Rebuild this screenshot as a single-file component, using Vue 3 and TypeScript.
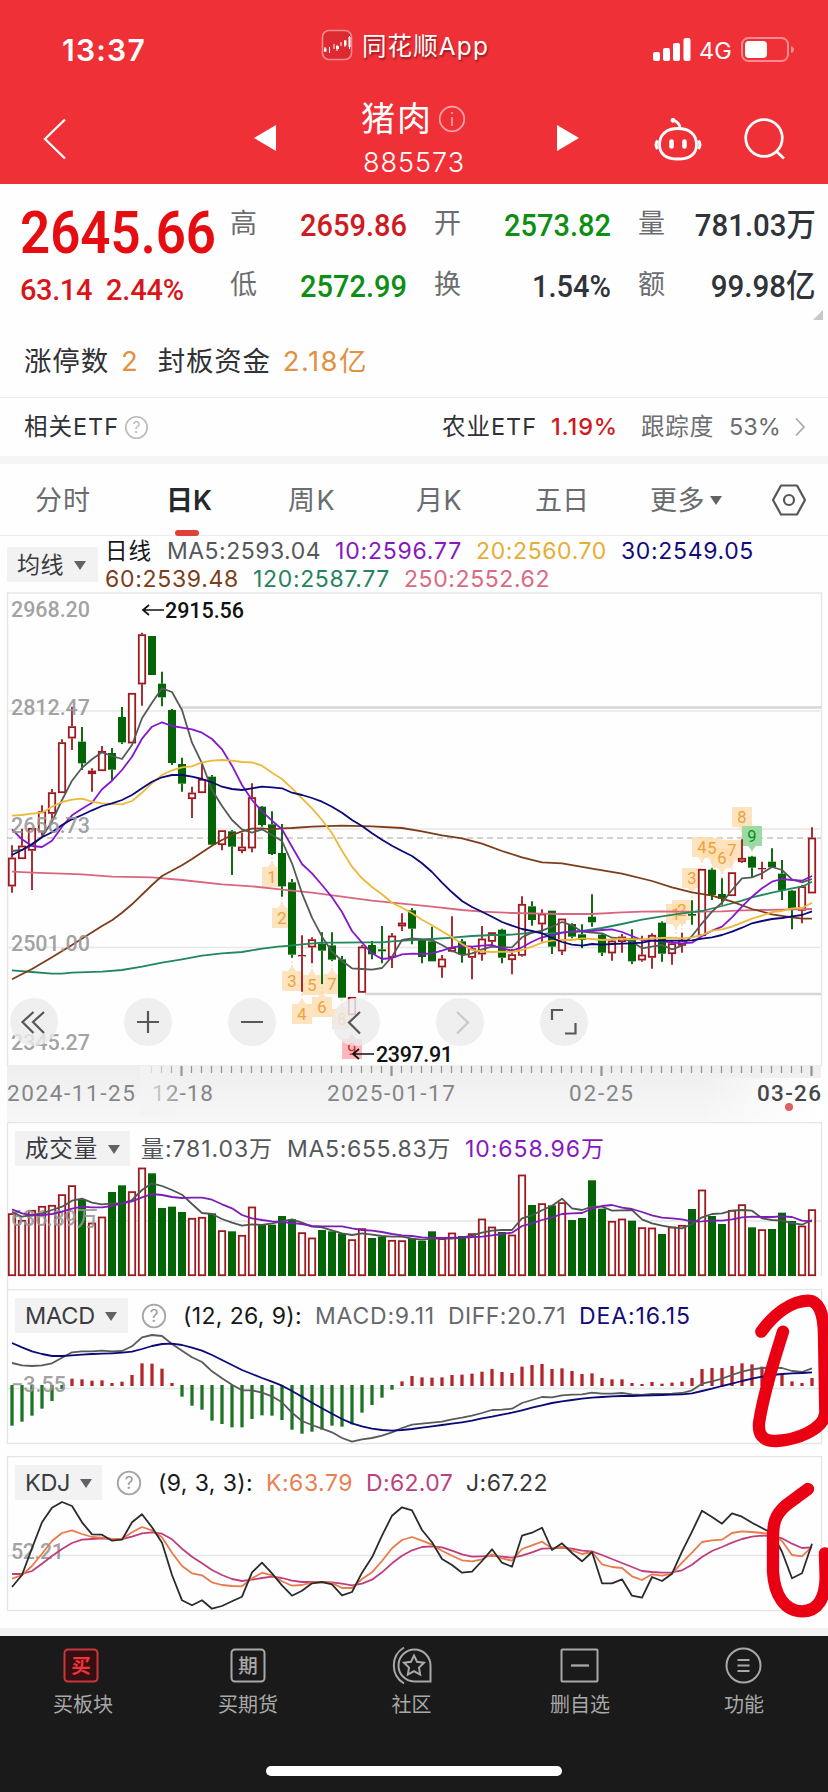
<script setup lang="ts">
import type { Directive } from 'vue'

/*
 * Makes a label take the given width: by tracking, or with the
 * squeeze modifier by narrowing the letterforms themselves.
 */
const vFit: Directive<HTMLElement, number, 'squeeze'> = {
  mounted(el, { value, modifiers }) {
    const natural = el.getBoundingClientRect().width
    if (modifiers.squeeze) {
      el.style.transform = `scaleX(${(value / natural).toFixed(4)})`
      return
    }
    const count = Array.from(el.textContent ?? '').length
    el.style.letterSpacing = `${((value - natural) / count).toFixed(3)}px`
  },
}

type Candle = [up: 0 | 1, top: number, bottom: number, high: number, low: number]
type Block = { x: number; y: number; points: number[] }

/* Values are stored in thirds of a pixel, relative to the origin of their block. */
const third = (origin: number, v: number) => origin + v / 3
const at = (i: number) => 12 + i * 10

const shift = (rows: Candle[], y: number): Candle[] =>
  rows.map(([u, a, b, h, l]) => [u, third(y, a), third(y, b), third(y, h), third(y, l)])

const candles: Candle[] = [
  ...shift([
    [1, 803, 889, 766, 908], [1, 767, 807, 716, 807], [1, 714, 782, 714, 900], [1, 664, 727, 646, 737],
    [1, 607, 671, 597, 692], [1, 457, 609, 448, 609], [1, 409, 445, 350, 480], [0, 455, 520, 411, 540],
    [1, 542, 552, 535, 605], [1, 483, 543, 468, 543], [0, 489, 539, 474, 570], [0, 381, 457, 351, 462],
    [1, 309, 460, 309, 460], [1, 133, 283, 128, 347], [0, 138, 255, 138, 255], [0, 281, 322, 245, 349],
    [0, 360, 519, 357, 525], [0, 522, 581, 503, 605], [1, 608, 627, 590, 684], [1, 567, 609, 522, 609],
    [0, 560, 764, 555, 768], [1, 721, 765, 721, 781], [0, 724, 770, 720, 855], [1, 770, 783, 728, 790],
    [1, 622, 775, 580, 787], [0, 650, 705, 648, 710], [0, 703, 792, 664, 795],
  ], 590),
  ...shift([
    [0, 339, 439, 252, 470], [0, 427, 644, 417, 653], [1, 645, 649, 586, 755], [1, 598, 622, 592, 670],
    [0, 611, 632, 577, 732], [0, 616, 659, 577, 663], [0, 658, 773, 648, 773], [1, 771, 825, 771, 825],
    [1, 620, 758, 615, 758], [0, 615, 643, 603, 658], [0, 628, 634, 558, 670], [1, 587, 653, 579, 684],
    [1, 548, 559, 520, 573], [0, 511, 566, 504, 613], [0, 597, 651, 597, 670], [0, 604, 664, 560, 664],
    [1, 656, 682, 645, 713], [1, 622, 635, 529, 637], [0, 604, 643, 597, 668], [1, 625, 653, 620, 718],
    [1, 596, 643, 558, 662], [1, 577, 605, 577, 620], [0, 569, 653, 566, 670], [1, 643, 660, 627, 703],
    [1, 492, 647, 469, 650], [0, 499, 540, 484, 557],
  ], 740),
  ...shift([
    [1, 401, 433, 388, 485], [0, 392, 500, 392, 522], [1, 416, 514, 416, 525], [0, 432, 470, 430, 475],
    [0, 463, 480, 433, 505], [0, 410, 427, 343, 440], [0, 464, 518, 460, 528], [1, 482, 520, 480, 542],
    [1, 470, 486, 462, 518], [0, 475, 544, 448, 552], [1, 524, 541, 467, 545], [1, 465, 533, 460, 566],
    [0, 428, 521, 424, 545], [1, 490, 522, 480, 554], [1, 480, 497, 458, 518], [0, 402, 407, 361, 434],
    [1, 267, 468, 267, 468], [0, 269, 345, 265, 360], [0, 342, 356, 295, 374], [1, 277, 348, 277, 348],
    [1, 234, 246, 178, 248], [0, 230, 263, 228, 293], [1, 264, 268, 245, 298], [0, 245, 262, 205, 262],
    [0, 281, 331, 240, 360], [0, 332, 385, 330, 448], [1, 319, 392, 315, 430], [1, 173, 340, 142, 340],
  ], 780),
]

const trace = (a: number[], b: number[], c: number[]): string => {
  const blocks: Block[] = [
    { x: 0, y: 590, points: a },
    { x: 270, y: 740, points: b },
    { x: 540, y: 780, points: c },
  ]
  return blocks
    .flatMap((k) => {
      const out: string[] = []
      for (let i = 0; i < k.points.length; i += 2) {
        out.push(`${third(k.x, k.points[i]).toFixed(1)},${third(k.y, k.points[i + 1]).toFixed(1)}`)
      }
      return out
    })
    .join(' ')
}

const averages = [
  {
    color: '#d9667f',
    points: trace(
      [36, 845, 96, 848, 186, 851, 246, 853, 336, 860, 456, 862, 546, 870, 666, 883, 756, 889, 840, 898],
      [36, 449, 126, 458, 216, 470, 306, 482, 396, 491, 486, 500, 576, 510, 636, 515, 726, 519, 816, 521],
      [66, 402, 156, 402, 246, 397, 306, 395, 366, 394, 426, 395, 486, 395, 546, 394, 606, 391, 666, 390, 726, 389, 816, 387],
    ),
  },
  {
    color: '#21875f',
    points: trace(
      [36, 1141, 96, 1146, 156, 1151, 186, 1151, 216, 1148, 306, 1145, 366, 1140, 426, 1130, 486, 1118, 546, 1108, 606, 1097, 666, 1090, 726, 1086, 786, 1076, 840, 1069],
      [36, 619, 96, 613, 156, 608, 216, 608, 276, 607, 336, 607, 366, 604, 426, 600, 486, 597, 546, 593, 606, 588, 666, 585, 726, 584, 786, 578, 816, 574],
      [6, 462, 66, 458, 126, 453, 186, 444, 246, 432, 306, 419, 366, 409, 426, 400, 486, 393, 546, 378, 606, 362, 636, 352, 696, 338, 756, 325, 786, 320, 816, 305],
    ),
  },
  {
    color: '#7c3d18',
    points: trace(
      [36, 1168, 96, 1137, 156, 1102, 216, 1065, 306, 1008, 336, 991, 366, 968, 396, 943, 456, 885, 486, 858, 546, 826, 576, 807, 636, 767, 666, 750, 696, 735, 726, 724, 756, 716, 786, 715, 816, 718],
      [36, 265, 66, 264, 126, 260, 216, 257, 306, 259, 396, 264, 456, 274, 516, 286, 576, 295, 636, 311, 696, 333, 756, 352, 816, 367],
      [66, 250, 156, 266, 246, 281, 336, 303, 396, 322, 456, 337, 516, 347, 576, 365, 636, 387, 696, 403, 756, 412, 786, 416, 816, 416],
    ),
  },
  {
    color: '#555a58',
    points: trace(
      [36, 783, 66, 780, 96, 766, 126, 740, 156, 695, 186, 630, 216, 572, 246, 533, 276, 508, 306, 487, 336, 498, 366, 507, 396, 465, 426, 385, 456, 338, 486, 295, 516, 306, 546, 360, 576, 458, 606, 520, 636, 600, 666, 648, 696, 690, 726, 718, 756, 728, 786, 718, 816, 735],
      [36, 303, 66, 370, 96, 460, 126, 533, 156, 590, 186, 635, 216, 663, 246, 685, 276, 687, 306, 689, 336, 684, 366, 650, 396, 600, 426, 595, 456, 598, 486, 600, 516, 615, 546, 632, 576, 646, 606, 640, 636, 628, 666, 620, 696, 622, 726, 622, 756, 592, 786, 578, 816, 572],
      [36, 440, 66, 426, 96, 436, 126, 455, 156, 458, 186, 460, 216, 473, 246, 475, 276, 485, 306, 505, 336, 500, 366, 495, 396, 508, 426, 497, 456, 468, 486, 430, 516, 395, 546, 368, 576, 330, 606, 295, 636, 292, 666, 280, 696, 261, 726, 270, 756, 298, 786, 307, 816, 297],
    ),
  },
  {
    color: '#8618cc',
    points: trace(
      [36, 718, 66, 748, 96, 768, 126, 771, 156, 752, 186, 710, 216, 676, 246, 656, 276, 638, 306, 598, 336, 572, 366, 540, 396, 500, 426, 446, 456, 410, 486, 397, 516, 408, 546, 413, 576, 418, 606, 428, 636, 447, 666, 478, 696, 527, 726, 585, 756, 630, 786, 664, 816, 692],
      [36, 268, 66, 320, 96, 372, 126, 400, 156, 435, 186, 472, 216, 516, 246, 573, 276, 608, 306, 640, 336, 657, 366, 654, 396, 643, 426, 641, 456, 642, 486, 640, 516, 632, 546, 622, 576, 618, 606, 620, 636, 617, 666, 615, 696, 625, 726, 632, 756, 622, 786, 605, 816, 592],
      [36, 466, 66, 458, 96, 455, 126, 454, 156, 453, 186, 450, 216, 448, 246, 456, 276, 468, 306, 480, 336, 482, 366, 484, 396, 487, 426, 490, 456, 488, 486, 468, 516, 452, 546, 440, 576, 412, 606, 380, 636, 350, 666, 325, 696, 305, 726, 297, 756, 300, 786, 302, 816, 288],
    ),
  },
  {
    color: '#ecb93a',
    points: trace(
      [36, 677, 66, 675, 96, 671, 126, 668, 156, 650, 186, 636, 216, 629, 246, 626, 276, 635, 306, 640, 366, 643, 396, 633, 426, 608, 456, 580, 486, 555, 516, 541, 546, 532, 576, 529, 606, 517, 636, 512, 666, 510, 696, 512, 726, 516, 756, 517, 786, 527, 816, 548],
      [36, 117, 66, 145, 96, 175, 126, 205, 156, 240, 186, 280, 216, 332, 246, 380, 276, 415, 306, 441, 336, 463, 366, 488, 396, 503, 426, 520, 456, 539, 486, 556, 516, 574, 546, 592, 576, 612, 606, 630, 636, 634, 666, 636, 696, 635, 726, 636, 756, 630, 786, 620, 816, 608],
      [36, 482, 66, 480, 96, 480, 126, 475, 156, 477, 186, 480, 216, 478, 246, 476, 276, 478, 306, 478, 336, 475, 366, 474, 396, 473, 426, 475, 456, 472, 486, 465, 516, 452, 546, 448, 576, 440, 606, 428, 636, 416, 666, 407, 696, 396, 726, 393, 756, 385, 786, 384, 816, 368],
    ),
  },
  {
    color: '#0b0878',
    points: trace(
      [36, 795, 66, 780, 96, 762, 126, 742, 156, 727, 186, 705, 216, 688, 246, 675, 276, 661, 306, 648, 336, 640, 366, 630, 396, 615, 426, 595, 456, 575, 486, 562, 516, 555, 546, 555, 576, 560, 606, 567, 636, 577, 666, 590, 696, 597, 726, 600, 756, 595, 786, 590, 816, 592],
      [36, 145, 66, 158, 96, 165, 126, 174, 156, 185, 186, 200, 216, 218, 246, 240, 276, 258, 306, 280, 336, 299, 366, 317, 396, 333, 426, 348, 456, 370, 486, 396, 516, 428, 546, 457, 576, 483, 606, 501, 636, 515, 666, 530, 696, 546, 726, 557, 756, 567, 786, 573, 816, 580],
      [36, 474, 66, 486, 96, 494, 126, 497, 156, 492, 186, 494, 216, 492, 246, 491, 276, 490, 306, 488, 336, 482, 366, 482, 396, 482, 426, 482, 456, 481, 486, 476, 516, 472, 546, 465, 576, 455, 606, 443, 636, 430, 666, 423, 696, 417, 726, 414, 756, 409, 786, 405, 816, 394],
    ),
  },
]

const line = (origin: number, values: number[]) =>
  values.map((v, i) => `${at(i)},${third(origin, v).toFixed(1)}`).join(' ')

const volumes = [
  460, 480, 450, 438, 435, 403, 376, 418, 488, 470, 396, 376, 394, 323, 340, 444, 440, 456, 474, 471, 460, 511, 514, 525, 440, 492, 494,
  468, 478, 517, 533, 510, 514, 520, 538, 505, 534, 530, 540, 541, 535, 542, 514, 535, 518, 528, 520, 476, 500, 516, 524, 344, 435, 430,
  436, 427, 480, 474, 361, 446, 483, 476, 482, 502, 503, 522, 500, 495, 447, 389, 468, 492, 450, 433, 502, 508, 507, 458, 483, 497, 448,
].map((v) => third(1060, v))

const volumeMa5 = line(1060, [
  455, 470, 465, 460, 450, 440, 422, 416, 428, 433, 430, 430, 420, 390, 370, 378, 390, 404, 432, 459, 462, 477, 488, 497, 493, 495, 490,
  484, 478, 488, 500, 502, 511, 520, 525, 520, 524, 528, 530, 530, 536, 539, 536, 535, 536, 533, 526, 518, 512, 510, 510, 475, 466, 451,
  437, 416, 445, 450, 440, 440, 452, 451, 450, 478, 490, 497, 502, 505, 492, 472, 462, 460, 452, 450, 452, 475, 480, 482, 489, 494, 480,
])
const volumeMa10 = line(1060, [
  448, 460, 466, 465, 462, 455, 446, 440, 442, 442, 438, 430, 424, 412, 402, 405, 411, 414, 413, 413, 419, 433, 445, 465, 475, 480, 484,
  486, 489, 492, 498, 499, 499, 499, 505, 510, 512, 516, 522, 526, 528, 532, 533, 534, 533, 533, 531, 530, 526, 522, 518, 498, 490, 480,
  472, 462, 460, 459, 446, 438, 435, 443, 447, 456, 466, 473, 475, 478, 485, 484, 481, 482, 478, 472, 470, 471, 471, 469, 471, 482, 484,
])

const histogram = [
  422, 410, 392, 371, 348, 312, 281, 283, 287, 286, 294, 290, 270, 235, 236, 251, 294, 335, 362, 374, 407, 417, 427, 427, 402, 391, 392,
  405, 434, 446, 440, 434, 422, 425, 418, 383, 360, 338, 314, 289, 273, 277, 278, 277, 270, 269, 266, 260, 252, 261, 264, 245, 240, 237,
  252, 250, 258, 267, 265, 279, 283, 283, 294, 297, 291, 296, 293, 290, 279, 252, 249, 249, 243, 235, 238, 245, 254, 268, 289, 294, 279,
].map((v) => third(1285, v))
const diff = line(1285, [
  234, 241, 243, 241, 235, 218, 202, 199, 199, 197, 199, 198, 184, 157, 150, 153, 177, 197, 217, 231, 259, 280, 299, 316, 316, 323, 334,
  352, 383, 408, 420, 431, 442, 459, 470, 463, 459, 452, 442, 429, 419, 416, 413, 410, 403, 398, 392, 384, 375, 374, 371, 354, 345, 336,
  337, 331, 329, 328, 323, 326, 326, 324, 328, 330, 327, 327, 326, 324, 316, 296, 289, 281, 270, 260, 253, 249, 248, 249, 258, 261, 250,
])
const dea = line(1285, [
  174, 187, 199, 207, 213, 213, 211, 209, 207, 206, 205, 203, 200, 192, 183, 177, 176, 180, 188, 197, 210, 225, 240, 255, 267, 279, 290,
  302, 318, 335, 353, 370, 386, 402, 415, 424, 431, 435, 437, 435, 432, 428, 424, 420, 416, 412, 407, 400, 395, 389, 383, 376, 368, 361,
  354, 349, 345, 341, 338, 336, 334, 333, 333, 332, 331, 330, 329, 328, 325, 318, 311, 303, 296, 288, 281, 275, 270, 267, 265, 264, 262,
])
const lineJ = line(1285, [
  906, 870, 790, 712, 668, 651, 663, 712, 748, 749, 767, 764, 712, 688, 727, 773, 870, 946, 961, 946, 971, 963, 949, 935, 862, 833, 865,
  901, 932, 917, 895, 891, 898, 931, 921, 863, 817, 752, 692, 667, 676, 735, 772, 822, 840, 863, 860, 828, 793, 833, 845, 752, 743, 728,
  795, 775, 804, 829, 801, 895, 895, 883, 932, 938, 876, 888, 866, 800, 740, 677, 696, 716, 685, 695, 713, 729, 745, 800, 880, 865, 776,
])
const lineK = line(1285, [
  881, 870, 843, 806, 768, 744, 736, 747, 756, 758, 762, 762, 742, 726, 736, 757, 803, 843, 865, 871, 892, 900, 903, 904, 880, 863, 871,
  889, 902, 900, 892, 891, 894, 909, 909, 882, 862, 828, 790, 765, 756, 767, 779, 797, 812, 826, 829, 823, 808, 820, 827, 792, 781, 770,
  790, 785, 796, 807, 801, 838, 846, 849, 874, 885, 868, 872, 866, 833, 803, 771, 766, 764, 744, 739, 741, 744, 748, 768, 810, 814, 785,
])
const lineD = line(1285, [
  867, 867, 858, 836, 813, 792, 774, 764, 762, 760, 762, 762, 755, 745, 742, 746, 763, 791, 815, 835, 855, 870, 882, 888, 884, 879, 875,
  879, 887, 891, 891, 891, 892, 896, 901, 896, 884, 862, 835, 812, 796, 786, 784, 787, 797, 808, 815, 814, 812, 815, 818, 812, 802, 791,
  790, 788, 791, 797, 799, 810, 822, 834, 846, 858, 861, 863, 862, 856, 839, 816, 798, 786, 773, 762, 755, 752, 753, 760, 776, 789, 787,
])

const counts = [
  { x: 272, y: 877, n: '1', tip: -1 }, { x: 282, y: 918, n: '2', tip: -1 }, { x: 292, y: 981, n: '3', tip: -1 },
  { x: 302, y: 1014, n: '4', tip: -1 }, { x: 312, y: 985, n: '5', tip: -1 }, { x: 322, y: 1007, n: '6', tip: -1 },
  { x: 332, y: 984, n: '7', tip: -1 }, { x: 342, y: 1019, n: '8', tip: -1 }, { x: 352, y: 1049, n: '9', tip: -1, tone: 'low' },
  { x: 676, y: 914, n: '1', tip: 1 }, { x: 682, y: 910, n: '2', tip: 1 }, { x: 692, y: 878, n: '3', tip: 1 },
  { x: 702, y: 847, n: '4', tip: 1 }, { x: 712, y: 848, n: '5', tip: 1 }, { x: 722, y: 858, n: '6', tip: 1 },
  { x: 732, y: 850, n: '7', tip: 1 }, { x: 742, y: 817, n: '8', tip: 1 }, { x: 752, y: 836, n: '9', tip: 1, tone: 'high' },
]

const scaleLabels = [
  { y: 617, text: '2968.20' }, { y: 715, text: '2812.47' }, { y: 833, text: '2656.73' },
  { y: 951, text: '2501.00' }, { y: 1050, text: '2345.27' },
]
const ticks = Array.from({ length: 67 }, (_, i) => 152 + i * 10)
const dates = [
  { x: 7, w: 128, text: '2024-11-25' }, { x: 152, w: 61, text: '12-18' }, { x: 327, w: 128, text: '2025-01-17' },
  { x: 569, w: 64, text: '02-25' }, { x: 757, w: 64, text: '03-26', now: true },
]

const quotes = [
  ['高', '2659.86', 'up', 107], ['开', '2573.82', 'down', 107], ['量', '781.03万', 'ink', 121],
  ['低', '2572.99', 'down', 107], ['换', '1.54%', 'ink', 79], ['额', '99.98亿', 'ink', 105],
] as const
</script>

<template>
  <main class="page">
    <header class="top">
      <div class="status">
        <b v-fit="84" class="clock">13:37</b>
        <svg class="app-icon" width="32" height="32" viewBox="0 0 32 32">
          <rect x="1.500" y="1.500" width="29" height="29" rx="6.500" fill="#dd2a30" stroke="#f68b8e" stroke-width="1.600" />
          <path d="M4 18v5M8.500 18v6M13 15v5M16 16v6M20 13v4M24 11v7M28.500 7v13" stroke="#fff" stroke-width="1" />
          <path d="M3 19.500h2.500v3H3zM15 17h3v3h-3zM23 11.500h2.500v5H23zM27.500 8h2v10h-2z" fill="#fff" />
        </svg>
        <span v-fit="127" class="app-name">同花顺App</span>
        <svg class="signal" width="38" height="24" viewBox="0 0 38 24" fill="#fff">
          <rect y="14" width="7" height="9" rx="2" /><rect x="10" y="10" width="7" height="13" rx="2" />
          <rect x="20" y="5" width="7" height="18" rx="2" /><rect x="30.500" width="7" height="23" rx="2" />
        </svg>
        <span v-fit="33" class="net">4G</span>
        <svg class="battery" width="54" height="26" viewBox="0 0 54 26">
          <rect x="1" y="1" width="46" height="23" rx="6.500" fill="none" stroke="#f98c90" stroke-width="2" />
          <rect x="4" y="4" width="22" height="17" rx="4" fill="#fff" />
          <path d="M50 9q3 1 3 3.500t-3 3.500z" fill="#f98c90" />
        </svg>
      </div>
      <nav class="nav">
        <svg class="back" width="26" height="42" viewBox="0 0 26 42"><path d="M23 1.500L3 21l20 19.500" fill="none" stroke="#fff" stroke-width="2.300" /></svg>
        <svg class="prev" width="24" height="26" viewBox="0 0 24 26"><path d="M23 0v26L1 13z" fill="#fff" /></svg>
        <div class="title">
          <div class="name"><span v-fit="72">猪肉</span>
            <svg width="28" height="28" viewBox="0 0 28 28" fill="none" stroke="#ffa5a8" stroke-width="1.700"><circle cx="14" cy="14" r="12.300" /><path d="M14 12v9M14 7v2" /></svg>
          </div>
          <div class="code"><span v-fit="102">885573</span></div>
        </div>
        <svg class="next" width="24" height="26" viewBox="0 0 24 26"><path d="M1 0v26l22-13z" fill="#fff" /></svg>
        <svg class="robot" width="50" height="46" viewBox="0 0 50 46" fill="none" stroke="#fff">
          <path d="M25 12.500C14 12.500 6.500 18 6.500 28.500c0 10 7 14.500 18.500 14.500s18.500-4.500 18.500-14.500C43.500 18 36 12.500 25 12.500zM27 12.500c0-4-2-6.500-6-8" stroke-width="2.800" />
          <circle cx="20" cy="4.300" r="2" fill="#fff" stroke-width="1" />
          <path d="M4.500 24.500c-1.700 2.500-1.700 6 0 8.500M45.500 24.500c1.700 2.500 1.700 6 0 8.500" stroke-width="3" />
          <path d="M18.500 25.500v5M31.500 25.500v5" stroke-width="4.600" stroke-linecap="round" />
        </svg>
        <svg class="search" width="42" height="42" viewBox="0 0 42 42" fill="none" stroke="#fff" stroke-width="2.700"><circle cx="20" cy="20" r="18.300" /><path d="M32.500 33.500l7.500 7" /></svg>
      </nav>
    </header>

    <section class="quote">
      <div class="last">
        <div class="price"><span v-fit.squeeze="196">2645.66</span></div>
        <div class="change"><span v-fit="72">63.14</span><span v-fit="78">2.44%</span></div>
      </div>
      <dl class="facts">
        <div v-for="[k, v, tone, w] in quotes" :key="k"><dt>{{ k }}</dt><dd v-fit.squeeze="w" :class="tone">{{ v }}</dd></div>
      </dl>
      <svg class="fold" width="12" height="11" viewBox="0 0 12 11"><path d="M11 0v10H1z" fill="#c8c8cc" /></svg>
    </section>

    <section class="limits">
      <span v-fit="85">涨停数</span><em class="n">2</em>
      <span v-fit="113" class="seal">封板资金</span><em v-fit="85" class="fund">2.18亿</em>
    </section>

    <section class="etf">
      <span v-fit="95">相关ETF</span>
      <svg class="help" width="25" height="25" viewBox="0 0 25 25"><circle cx="12.500" cy="12.500" r="10.700" fill="none" stroke="#bbb" stroke-width="1.600" /><text x="12.500" y="18" text-anchor="middle" font-size="15.500" fill="#bbb">?</text></svg>
      <span v-fit="95" class="fund-name">农业ETF</span><b v-fit="67" class="pct">1.19%</b>
      <span v-fit="73" class="track">跟踪度</span><span v-fit="52" class="track-n">53%</span>
      <svg class="more" width="12" height="20" viewBox="0 0 12 20"><path d="M2 1.500l8 8.500-8 8.500" fill="none" stroke="#aaa" stroke-width="1.800" /></svg>
    </section>
    <div class="band" />

    <nav class="tabs">
      <span v-fit="56" class="t1">分时</span><b v-fit="46" class="t2">日K</b><span v-fit="48" class="t3">周K</span>
      <span v-fit="46" class="t4">月K</span><span v-fit="54" class="t5">五日</span><span v-fit="55" class="t6">更多</span><i class="caret" />
      <svg class="gear" width="36" height="34" viewBox="0 0 36 34" fill="none" stroke="#55575b" stroke-width="2.200"><path d="M10 2.500h16L34 17l-8 14.500H10L2 17z" stroke-linejoin="round" /><circle cx="18" cy="17" r="5" /></svg>
    </nav>

    <section class="legend">
      <div class="pick ma"><span v-fit="47">均线</span><i class="caret" /></div>
      <div class="rows">
        <div><span v-fit="47" class="black">日线</span><span v-fit="154" class="c5">MA5:2593.04</span><span v-fit="127" class="c10">10:2596.77</span><span v-fit="131" class="c20">20:2560.70</span><span v-fit="133" class="c30">30:2549.05</span></div>
        <div><span v-fit="134" class="c60">60:2539.48</span><span v-fit="137" class="c120">120:2587.77</span><span v-fit="146" class="c250">250:2552.62</span></div>
      </div>
    </section>

    <svg class="chart" width="828" height="532" viewBox="0 590 828 532">
      <defs>
        <linearGradient id="axis" x1="0" y1="0" x2="0" y2="1"><stop offset="0" stop-color="#eeeeef" /><stop offset="1" stop-color="#f7f7f8" /></linearGradient>
        <linearGradient id="fade"><stop offset="0" stop-color="#f3f3f4" /><stop offset="1" stop-color="#f3f3f4" stop-opacity="0" /></linearGradient>
        <linearGradient id="edge"><stop offset="0" stop-color="#fff" stop-opacity="0" /><stop offset="1" stop-color="#fff" /></linearGradient>
      </defs>
      <rect x="7" y="1065" width="814" height="57" fill="url(#axis)" />
      <rect x="700" y="1078" width="121" height="44" fill="url(#edge)" />
      <path d="M7.500 1066V593h814v473M7.500 711H820M7.500 829H820M7.500 947.500H820" fill="none" stroke="#e7e7e8" stroke-width="1.500" />
      <path d="M182 707.500H821M365 994H821" stroke="#d6d6d6" stroke-width="2.500" />
      <path d="M7 838H821" stroke="#c7c3b5" stroke-width="1.400" stroke-dasharray="6 4" />
      <g v-for="(c, i) in counts" :key="i" :class="['count', c.tone]">
        <path :d="`M${c.x - 10} ${c.y - 10}h20v20h-20zM${c.x - 4} ${c.y + c.tip * 10}l4 ${c.tip * 5}l4 ${-c.tip * 5}z`" class="box" />
        <path :d="`M${c.x} ${c.y + c.tip * 14}v${c.tip * 9}`" class="stem" />
      </g>
      <g v-for="(c, i) in counts" :key="'n' + i" :class="['count', c.tone]">
        <text :x="c.x" :y="c.y + 6" text-anchor="middle">{{ c.n }}</text>
      </g>
      <g v-for="([up, top, bottom, high, low], i) in candles" :key="'k' + i" :class="up ? 'rise' : 'fall'">
        <path :d="`M${at(i)} ${high}V${top}M${at(i)} ${bottom}V${low}`" />
        <rect v-if="up && bottom - top > 3" :x="at(i) - 3.2" :y="top + 0.8" width="6.400" :height="bottom - top - 1.6" />
        <rect v-else :x="at(i) - 4" :y="top" width="8" :height="bottom - top" class="solid" />
      </g>
      <polyline v-for="a in averages" :key="a.color" :points="a.points" :stroke="a.color" class="curve" />
      <text v-for="l in scaleLabels" :key="l.y" :x="11" :y="l.y" textLength="79" class="axis-label">{{ l.text }}</text>
      <g fill="#ececec" fill-opacity=".82"><circle v-for="x in [34, 148, 252, 356, 460, 564]" :key="x" :cx="x" cy="1022" r="24" /></g>
      <g fill="none" stroke="#55575a" stroke-width="2.200">
        <path d="M33.500 1012l-11 10 11 11M44 1012l-11 10 11 11M137 1022h22M148 1011v22M241 1022h22" />
        <path d="M360 1012l-11 10.500 11 11M552 1020v-10h11M565 1033.500h10.500v-10.500" />
        <path d="M457 1012l11 10.500-11 11" stroke="#c9c9c9" />
      </g>
      <g class="extreme">
        <path d="M164 610h-21m6-5l-6 5 6 5M374 1054h-21m6-5l-6 5 6 5" />
        <text x="165" y="618" textLength="79">2915.56</text><text x="376" y="1062" textLength="77">2397.91</text>
      </g>
      <path v-for="x in ticks" :key="x" :d="`M${x - 0.5} 1066v${(x - 182) % 210 === 0 ? 10 : 7}`" stroke="#929294" :stroke-width="(x - 182) % 210 === 0 ? 2.2 : 1.2" />
      <text v-for="d in dates" :key="d.x" :x="d.x" y="1101" :textLength="d.w" :class="['date', { now: d.now }]">{{ d.text }}</text>
      <rect x="140" y="1066" width="44" height="50" fill="url(#fade)" />
      <circle cx="789" cy="1107" r="4" fill="#df5f62" />
    </svg>

    <section class="panel volume">
      <svg width="828" height="167" viewBox="0 1122 828 167">
        <path d="M7.500 1289V1122.500h814v154M7 1221H821" class="frame" />
        <g v-for="(v, i) in volumes" :key="i" :class="candles[i][0] ? 'rise' : 'fall'">
          <rect v-if="candles[i][0]" :x="at(i) - 3.2" :y="v + 0.8" width="6.400" :height="1274.400 - v" />
          <rect v-else :x="at(i) - 4" :y="v" width="8" :height="1276 - v" class="solid" />
        </g>
        <text x="11" y="1226" textLength="87" class="axis-label">636.89万</text>
        <polyline :points="volumeMa5" stroke="#4d5750" class="curve" /><polyline :points="volumeMa10" stroke="#7d1db5" class="curve" />
      </svg>
      <div class="head">
        <div class="pick"><span v-fit="73">成交量</span><i class="caret" /></div>
        <div class="vals"><span v-fit="132" class="c5">量:781.03万</span><span v-fit="164" class="c5">MA5:655.83万</span><span v-fit="140" class="c10">10:658.96万</span></div>
      </div>
    </section>

    <section class="panel macd">
      <svg width="828" height="167" viewBox="0 1289 828 167">
        <path d="M7.500 1443.500V1289.500h814v154zM7 1388.500H821" class="frame" />
        <path v-for="(v, i) in histogram" :key="i" :d="v > 1385 ? `M${at(i)} 1385V${v}` : `M${at(i)} 1386V${v}`" :stroke="v > 1385 ? '#1c7424' : '#b3262c'" stroke-width="3.300" />
        <text x="11" y="1392" textLength="55" class="axis-label">−3.55</text>
        <polyline :points="diff" stroke="#585b5a" class="curve" /><polyline :points="dea" stroke="#0b0878" class="curve" />
      </svg>
      <div class="head">
        <div class="pick"><span v-fit="70">MACD</span><i class="caret" /></div>
        <svg class="q" width="26" height="26" viewBox="0 0 26 26"><circle cx="13" cy="13" r="11.300" fill="none" stroke="#a5a5a5" stroke-width="1.800" /><text x="13" y="19" text-anchor="middle" font-size="17" fill="#999">?</text></svg>
        <div class="vals"><span v-fit="119" class="black">(12, 26, 9):</span><span v-fit="120" class="grey">MACD:9.11</span><span v-fit="118" class="grey">DIFF:20.71</span><span v-fit="112" class="c30">DEA:16.15</span></div>
      </div>
    </section>

    <section class="panel kdj">
      <svg width="828" height="172" viewBox="0 1456 828 172">
        <path d="M7.500 1610.500V1456.500h814v154zM7 1555.500H821" class="frame" />
        <text x="11" y="1559" textLength="53" class="axis-label">52.21</text>
        <polyline :points="lineD" stroke="#bf3f7e" class="curve" /><polyline :points="lineK" stroke="#ea7a49" class="curve" /><polyline :points="lineJ" stroke="#2b2b2d" class="curve" />
      </svg>
      <div class="head">
        <div class="pick"><span v-fit="45">KDJ</span><i class="caret" /></div>
        <svg class="q" width="26" height="26" viewBox="0 0 26 26"><circle cx="13" cy="13" r="11.300" fill="none" stroke="#a5a5a5" stroke-width="1.800" /><text x="13" y="19" text-anchor="middle" font-size="17" fill="#999">?</text></svg>
        <div class="vals"><span v-fit="95" class="black">(9, 3, 3):</span><span v-fit="87" class="ck">K:63.79</span><span v-fit="87" class="cd">D:62.07</span><span v-fit="82" class="cj">J:67.22</span></div>
      </div>
    </section>
    <div class="band foot" />

    <footer class="dock">
      <div class="items">
        <div class="item hot">
          <svg width="44" height="40" viewBox="0 0 44 40"><rect x="5.500" y="3.500" width="33" height="32" rx="3.500" fill="#351012" stroke="currentColor" stroke-width="2" /><text x="22" y="26.500" text-anchor="middle" font-size="19.500" font-weight="700" fill="#f5323a">买</text></svg>
          <span v-fit="60">买板块</span>
        </div>
        <div class="item">
          <svg width="44" height="40" viewBox="0 0 44 40"><rect x="5.500" y="3.500" width="33" height="32" rx="3.500" fill="none" stroke="currentColor" stroke-width="2" /><text x="22" y="26.500" text-anchor="middle" font-size="19.500" font-weight="500" fill="currentColor">期</text></svg>
          <span v-fit="60">买期货</span>
        </div>
        <div class="item">
          <svg width="44" height="40" viewBox="0 0 44 40" fill="none" stroke="currentColor" stroke-width="2"><path d="M40.500 35.500H24A16 16 0 1 1 40.500 19.500zM14 1.500A21 21 0 0 0 14 37.500" /><path d="M24 9.500l3 6.300 7 .9-5 4.900 1.200 7L24 25.200l-6.200 3.400 1.200-7-5-4.900 7-.9z" /></svg>
          <span v-fit="40">社区</span>
        </div>
        <div class="item">
          <svg width="44" height="40" viewBox="0 0 44 40" fill="none" stroke="currentColor" stroke-width="2"><rect x="3.500" y="3.500" width="36" height="32" rx="1" /><path d="M13 19.500h18" stroke-width="2.300" /></svg>
          <span v-fit="60">删自选</span>
        </div>
        <div class="item">
          <svg width="44" height="40" viewBox="0 0 44 40" fill="none" stroke="currentColor" stroke-width="2"><circle cx="21.500" cy="19.500" r="17" /><path d="M15.500 14h12M15.500 19.500h12M15.500 25h12" /></svg>
          <span v-fit="40">功能</span>
        </div>
      </div>
      <div class="home" />
    </footer>

    <svg class="ink-marks" width="138" height="345" viewBox="690 1285 138 345">
      <g transform="translate(413 1285) scale(.33333)" fill="none" stroke="#ea0013" stroke-width="37" stroke-linecap="round" stroke-linejoin="round">
        <path d="M1045 140C1085 85 1135 49 1185 47C1215 46 1232 80 1233 150L1237 385C1230 435 1150 464 1090 468C1045 469 1036 445 1038 415C1052 320 1085 220 1110 140" />
        <path d="M1185 612L1120 660C1085 690 1080 715 1080 760V860C1084 930 1115 979 1168 979C1215 979 1236 940 1238 880L1236 805" />
      </g>
    </svg>
  </main>
</template>

<style>
body { margin: 0; background: #fff; }
</style>

<style scoped>
.page { position: relative; width: 828px; height: 1792px; overflow: hidden; background: #fefefe; color: #303236; font-family: Inter, "Noto Sans CJK SC", sans-serif; white-space: nowrap; line-height: 1; display: flex; flex-direction: column; }
.page > * { flex-shrink: 0; }
svg { display: block; flex: none; }
span, b, em { flex: none; }
em { font-style: normal; }

.top { height: 184px; background: #f03037; color: #fff; }
.status { display: flex; align-items: center; height: 100px; padding-left: 62px; box-sizing: border-box; }
.clock { font-size: 30px; font-weight: 600; }
.app-icon { margin: -10px 0 0 175px; }
.app-name { margin: -8px 0 0 9px; font-size: 24.500px; text-shadow: 1px 2px 2px rgba(60, 0, 0, .5); }
.signal { margin-left: 164px; }
.net { margin: 2px 0 0 8px; font-size: 23.500px; }
.battery { margin: -1px 0 0 9px; }
.nav { display: flex; height: 84px; }
.back { margin: 18px 0 0 42px; }
.prev { margin: 25px 0 0 185px; }
.title { width: 136px; margin-left: 84px; }
.name { display: flex; align-items: center; height: 38px; gap: 5px; font-size: 34px; }
.name svg { margin-top: -1px; }
.code { margin: 11px 0 0 2px; font-size: 27px; font-weight: 350; }
.next { margin: 25px 0 0 59px; }
.robot { margin: 16px 0 0 73px; }
.search { margin: 18px 0 0 41px; }

.quote { position: relative; height: 141px; display: flex; font-family: Roboto, "Noto Sans CJK SC", sans-serif; }
.last { width: 210px; padding-left: 20px; color: #e50d11; }
.price { height: 58px; margin-top: 20px; font-size: 60px; font-weight: 600; line-height: 58px; }
.price span { display: inline-block; transform-origin: left; }
.change { display: flex; gap: 14px; margin-top: 14px; font-size: 29px; font-weight: 500; color: #d9151a; }
.facts { display: grid; grid-template-columns: 204px 204px 178px; grid-template-rows: 61px 61px; margin: 10px 0 0; }
.facts > div { display: flex; align-items: center; justify-content: space-between; padding-right: 27px; }
.facts > div:nth-child(3n) { padding-right: 0; }
.facts dt { font-size: 27px; color: #6b6d71; }
.facts dd { margin: 0; font-size: 32px; font-weight: 500; transform-origin: right; }
.up { color: #cf1a22; }
.down { color: #0d8f15; }
.ink { color: #303338; }
.fold { position: absolute; right: 4px; top: 126px; }

.limits { display: flex; align-items: center; height: 73px; box-sizing: border-box; padding: 1px 0 0 24px; border-bottom: 1.500px solid #ececec; font-size: 27.500px; }
.limits em { color: #e19141; font-size: 27.500px; }
.n { margin-left: 12px; }
.seal { margin-left: 20px; }
.fund { margin-left: 12px; }

.etf { display: flex; align-items: center; height: 58px; padding-left: 24px; font-size: 23.500px; }
.help { margin-left: 5px; }
.fund-name { margin-left: 293px; }
.pct { margin-left: 14px; color: #cf1a22; font-weight: 500; }
.track, .track-n { color: #6b6d71; }
.track { margin-left: 23px; }
.track-n { margin-left: 15px; }
.more { margin-left: 13px; }
.band { height: 8px; background: #f5f4f6; }

.tabs { display: flex; align-items: center; height: 72px; box-sizing: border-box; padding-top: 1px; border-bottom: 1px solid #ececec; font-size: 27px; color: #6a6c70; }
.t1 { margin-left: 35px; }
.t2 { position: relative; margin-left: 75px; color: #26282b; font-weight: 600; }
.t2::after { content: ""; position: absolute; left: 9px; top: 43px; width: 24px; height: 6px; border-radius: 3px; background: #e04238; }
.t3 { margin-left: 76px; }
.t4 { margin-left: 80px; }
.t5 { margin-left: 73px; }
.t6 { margin-left: 61px; }
.caret { width: 0; height: 0; border: 6.500px solid transparent; border-top: 9px solid #606266; border-bottom: 0; }
.tabs .caret { margin-left: 5px; }
.gear { margin-left: 49px; }

.legend { display: flex; height: 54px; padding-left: 7px; font-size: 23px; }
.pick { display: flex; align-items: center; gap: 10px; height: 35px; padding: 1px 10px 0; background: #f2f2f3; font-size: 23.500px; color: #3a3c40; box-sizing: border-box; }
.ma { width: 91px; margin-top: 11px; font-size: 23px; }
.rows { margin: 1px 0 0 7px; }
.rows div { display: flex; align-items: center; height: 28px; gap: 14px; }
.rows .black { margin-right: 1px; font-size: 22.500px; }
.black { color: #17181a; }
.c5 { color: #55585a; }
.c10 { color: #8618c0; }
.c20 { color: #e5ae35; }
.c30 { color: #130b7a; }
.c60 { color: #7c3d18; }
.c120 { color: #27835f; }
.c250 { color: #da6a80; }
.ck { color: #e78052; }
.cd { color: #bb427c; }
.cj { color: #36383a; }
.grey { color: #66686b; }

.curve { fill: none; stroke-width: 1.800; stroke-linejoin: round; }
.rise { stroke: #9e1a1e; stroke-width: 1.800; fill: #fff; }
.fall { stroke: #046506; stroke-width: 1.900; fill: #046506; }
.solid { stroke: none; }
.rise .solid { fill: #9e1a1e; }
.axis-label { font: 500 21.500px Roboto, "Noto Sans CJK SC", sans-serif; fill: #969698; fill-opacity: .9; }
.count .box { fill: #fddcae; fill-opacity: .8; }
.count .stem { stroke: #f3cda8; stroke-dasharray: 2 2; }
.count text { font: 16.500px Roboto, sans-serif; fill: #eda13d; }
.count.low .box { fill: #fba6ab; }
.count.low text { fill: #d02a34; }
.count.high .box { fill: #9bdba3; fill-opacity: 1; }
.count.high text { fill: #108a20; }
.extreme path { fill: none; stroke: #111; stroke-width: 1.700; }
.extreme text { font: 500 21.500px Roboto, sans-serif; fill: #111; }
.date { font: 22.500px Roboto, sans-serif; fill: #858588; }
.date.now { fill: #45474b; font-weight: 500; }

.panel { display: grid; }
.panel > * { grid-area: 1 / 1; }
.frame { fill: none; stroke: #e5e5e6; stroke-width: 1.300; }
.head { display: flex; align-items: center; height: 35px; margin: 9px 0 0 15px; font-size: 23px; z-index: 1; }
.volume .pick { width: 115px; }
.vals { display: flex; align-items: center; gap: 14px; margin: 1px 0 0 11px; }
.macd .pick { width: 113px; }
.macd .q { margin-left: 13px; }
.kdj .q { margin-left: 14px; }
.macd .vals, .kdj .vals { gap: 13px; margin-left: 16px; }

.foot { background: #f3f3f3; }
.dock { height: 156px; background: #1a1a1a; color: #a8a8a8; }
.items { display: grid; grid-template-columns: 166px 164px 163px 174px 154px; height: 84px; padding-top: 10px; box-sizing: border-box; }
.item { display: flex; flex-direction: column; align-items: center; gap: 9px; font-size: 20px; }
.hot svg { margin-left: -4px; color: #c9373b; }
.home { width: 296px; height: 10px; margin: 46px auto 0; border-radius: 5px; background: #fff; }
.ink-marks { position: absolute; left: 690px; top: 1285px; }
</style>
